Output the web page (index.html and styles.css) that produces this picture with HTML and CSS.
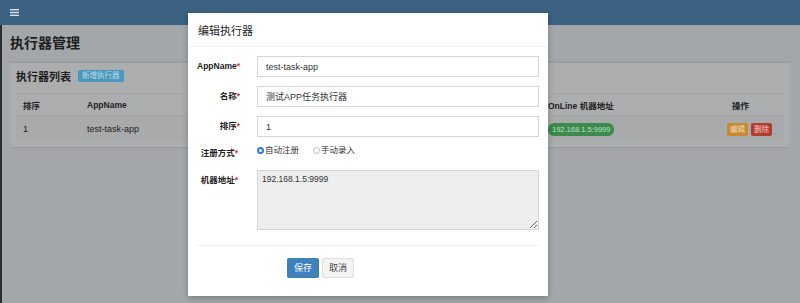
FILE: index.html
```html
<!DOCTYPE html>
<html lang="zh-CN">
<head>
    <meta charset="UTF-8">
    <title>执行器管理</title>
    <link rel="stylesheet" href="styles.css">
</head>
<body>
    <div class="header">
        <span class="toggle">
            <svg width="9" height="7" viewBox="0 0 9 7"><rect y="0" width="9" height="1.4" fill="#d8e2ea"/><rect y="2.8" width="9" height="1.4" fill="#d8e2ea"/><rect y="5.6" width="9" height="1.4" fill="#d8e2ea"/></svg>
        </span>
    </div>

    <div class="wrapper">
        <div class="content">
            <h1>执行器管理</h1>
            <div class="box">
                <div class="box-header">
                    <h3>执行器列表</h3>
                    <span class="btn-add">新增执行器</span>
                </div>
                <table class="list">
                    <tr>
                        <th class="c-order">排序</th>
                        <th class="c-app">AppName</th>
                        <th class="c-title"></th>
                        <th class="c-addr">OnLine 机器地址</th>
                        <th class="c-op">操作</th>
                    </tr>
                    <tr>
                        <td>1</td>
                        <td>test-task-app</td>
                        <td></td>
                        <td><span class="badge">192.168.1.5:9999</span></td>
                        <td><span class="op op-edit">编辑</span><span class="op op-del">删除</span></td>
                    </tr>
                </table>
            </div>
        </div>
    </div>

    <!-- modal lies over the dimmed page -->
    <div class="modal">
        <div class="modal-header">编辑执行器</div>
        <div class="modal-body">
            <div class="row">
                <label>AppName<i>*</i></label>
                <div class="field"><input type="text" value="test-task-app"></div>
            </div>
            <div class="row">
                <label>名称<i>*</i></label>
                <div class="field"><input type="text" value="测试APP任务执行器"></div>
            </div>
            <div class="row">
                <label>排序<i>*</i></label>
                <div class="field"><input type="text" value="1"></div>
            </div>
            <div class="row row-radio">
                <label class="light">注册方式<i>*</i></label>
                <div class="field radios">
                    <span class="radio"><span class="dot on"></span>自动注册</span>
                    <span class="radio"><span class="dot"></span>手动录入</span>
                </div>
            </div>
            <div class="row">
                <label class="light">机器地址<i>*</i></label>
                <div class="field"><textarea readonly>192.168.1.5:9999</textarea></div>
            </div>
            <div class="divider"></div>
            <div class="actions">
                <span class="btn btn-save">保存</span>
                <span class="btn btn-cancel">取消</span>
            </div>
        </div>
    </div>
</body>
</html>
```

FILE: styles.css
```css
body {
    margin: 0;
    font-family: "Liberation Sans", "Noto Sans CJK SC", sans-serif;
    font-size: 9px;
    color: #1f2224;
    background-color: #a4a7aa;
    width: 800px;
    height: 303px;
    overflow: hidden;
}
.header {
    height: 25px;
    background-color: #3b6283;
    display: flex;
    align-items: center;
    padding-left: 10px;
}
.toggle {
    display: flex;
}
.wrapper {
    border-left: 2px solid #2a2e31;
    height: 278px;
}
.content {
    padding: 8px 10px 0 8px;
}
h1 {
    margin: 0 0 8px 0;
    font-size: 14px;
    font-weight: bold;
    color: #1c1f21;
    line-height: 20px;
}
.box {
    background-color: #acadae;
    border-top: 2px solid #9c9fa2;
    padding: 0 6px 6px 6px;
    box-shadow: 0 1px 1px rgba(0,0,0,0.08);
}
.box-header {
    display: flex;
    align-items: center;
    height: 25px;
}
.box-header h3 {
    margin: 0;
    font-size: 11px;
    font-weight: 600;
    color: #1c1f21;
}
.btn-add {
    margin-left: 7px;
    background-color: #4b98bd;
    color: #b9dcec;
    font-size: 7.5px;
    padding: 1px 4px;
    border-radius: 2px;
    line-height: 10px;
}
.list {
    width: 100%;
    border-collapse: collapse;
    margin-top: 5px;
}
.list th, .list td {
    text-align: left;
    padding: 0 7px;
    border-top: 1px solid #a2a4a6;
    white-space: nowrap;
}
.list th {
    height: 21px;
    font-weight: bold;
    font-size: 8.5px;
}
.list th.c-op {
    padding-left: 12px;
}
.list td {
    height: 25px;
    font-size: 9px;
    background-color: #a9aaab;
}
.c-order { width: 50px; }
.c-app { width: 140px; }
.c-title { width: 293px; }
.c-addr { width: 165px; }
.badge {
    background-color: #3c8a4e;
    color: #bfe0c6;
    font-size: 7.5px;
    padding: 2px 4px;
    border-radius: 6px;
}
.op {
    font-size: 7.5px;
    padding: 2px 3px;
    border-radius: 2px;
    color: #f1d9bb;
    margin-right: 3px;
}
.op-edit { background-color: #c88a2f; }
.op-del { background-color: #b33c30; color: #f0c9c5; }

.modal {
    position: absolute;
    left: 188px;
    top: 13px;
    width: 360px;
    height: 283px;
    background-color: #fff;
    box-shadow: 0 2px 6px rgba(0,0,0,0.25);
}
.modal-header {
    height: 33px;
    border-bottom: 1px solid #eef0f2;
    padding-left: 10px;
    font-size: 11px;
    line-height: 37px;
    color: #222;
}
.modal-body {
    padding: 9px 9px 0 9px;
}
.row {
    display: flex;
    margin-bottom: 9px;
}
.row label {
    box-sizing: border-box;
    width: 60px;
    padding-right: 17px;
    text-align: right;
    font-weight: bold;
    font-size: 8.5px;
    line-height: 21px;
    color: #222;
    white-space: nowrap;
}
.row label.light {
    font-weight: 600;
    padding-right: 19px;
}
.row label i {
    color: #d7392c;
    font-style: normal;
}
.field {
    flex: 1;
}
.field input {
    box-sizing: border-box;
    width: 100%;
    height: 21px;
    border: 1px solid #d2d6de;
    padding: 0 8px;
    font-family: inherit;
    font-size: 9px;
    color: #333;
}
.row-radio {
    height: 20px;
    margin-top: -3px;
    margin-bottom: 7px;
}
.radios {
    display: flex;
    align-items: flex-start;
    line-height: 12px;
    font-size: 8.5px;
    color: #333;
}
.radio {
    display: flex;
    align-items: center;
    margin-right: 14px;
    margin-top: 1px;
}
.dot {
    box-sizing: border-box;
    width: 7px;
    height: 7px;
    border-radius: 50%;
    border: 1px solid #bbb;
    margin-right: 1px;
}
.dot.on {
    border: 2px solid #2f7ce0;
    background-color: #fff;
}
.field textarea {
    box-sizing: border-box;
    width: 100%;
    height: 60px;
    border: 1px solid #d2d6de;
    background-color: #eeeeee;
    padding: 3px 4px;
    font-family: inherit;
    font-size: 8.5px;
    color: #333;
    resize: vertical;
    display: block;
}
.divider {
    border-top: 1px solid #eef0f2;
    margin-top: 15px;
}
.actions {
    display: flex;
    padding-left: 90px;
    margin-top: 12px;
}
.btn {
    width: 32px;
    height: 20px;
    line-height: 20px;
    font-size: 9px;
    border-radius: 2px;
    box-sizing: border-box;
    text-align: center;
    white-space: nowrap;
}
.btn-save {
    background-color: #3c81bb;
    color: #fff;
}
.btn-cancel {
    margin-left: 3px;
    background-color: #f4f4f4;
    border: 1px solid #ddd;
    line-height: 18px;
    color: #444;
}
```
